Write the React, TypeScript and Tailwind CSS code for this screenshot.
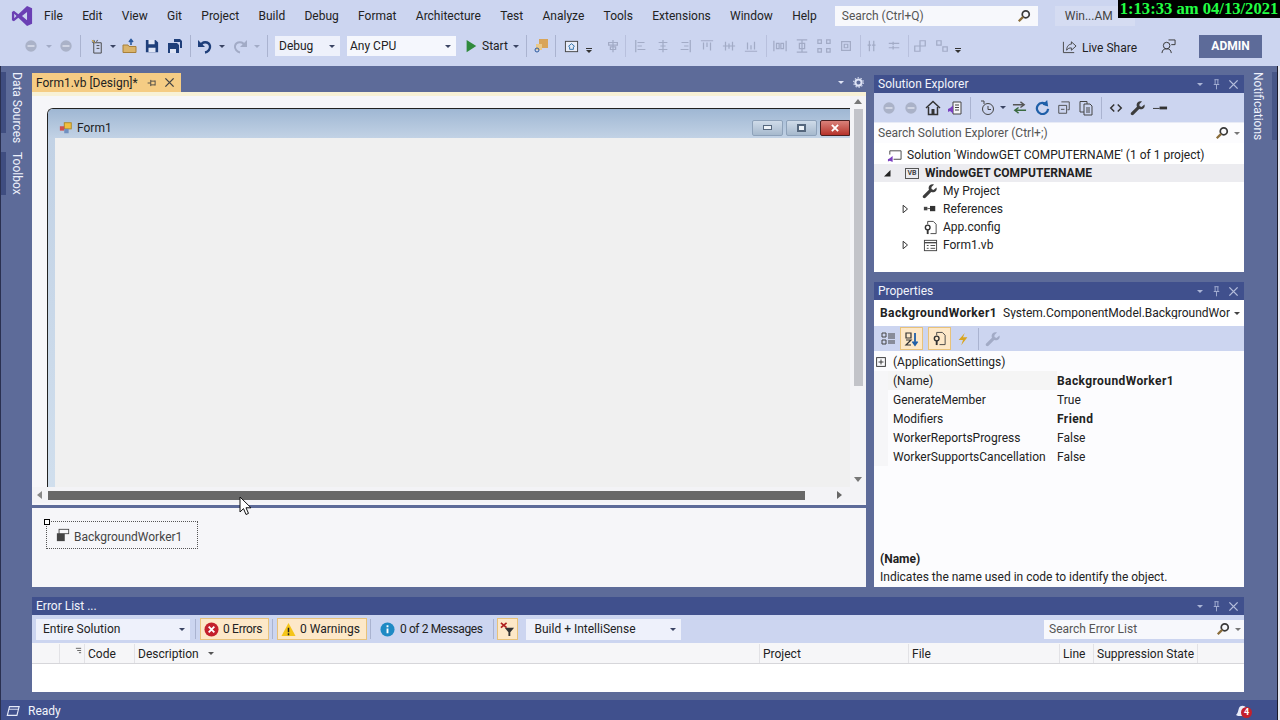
import React from "react";

type P = { children?: React.ReactNode; className?: string };
const Sv = ({ children, className = "w-4 h-4" }: P) => (
  <svg viewBox="0 0 16 16" className={className} fill="none">{children}</svg>
);
const Drop = ({ c = "border-t-[#3a4463]" }: { c?: string }) => (
  <span className={`block w-0 h-0 border-l-[3px] border-r-[3px] border-t-[3px] border-l-transparent border-r-transparent ${c}`} />
);
const Sep = ({ className = "" }: P) => <div className={`w-px h-[22px] bg-[#aab3d0] shrink-0 ${className}`} />;
const Grip = ({ className = "" }: P) => (
  <div className={`w-[4px] h-[20px] shrink-0 bg-[radial-gradient(#8c95b0_40%,transparent_45%)] bg-[length:2px_2px] ${className}`} />
);
const Slot = ({ children, className = "", w = "w-[22px]" }: P & { w?: string }) => (
  <div className={`flex items-center justify-center shrink-0 ${w} ${className}`}>{children}</div>
);

const Mag = ({ c = "#3a3a3a" }: { c?: string }) => (
  <Sv className="w-[14px] h-[14px]">
    <circle cx="10" cy="6" r="4" stroke={c} strokeWidth="2" />
    <path d="M7 9 L2 14" stroke="#8a6d3b" strokeWidth="2.6" />
  </Sv>
);
const BackCircle = () => (
  <Sv className="w-[14px] h-[14px]">
    <circle cx="8" cy="8" r="6.5" fill="#aab2c8" />
    <path d="M4 8h8" stroke="#d6dbe9" strokeWidth="2" />
  </Sv>
);
const Wrench = ({ c = "#3d3d3d", className = "w-4 h-4" }: { c?: string; className?: string }) => (
  <Sv className={className}>
    <path d="M14.5 4.5 L11.5 7 L9.5 6 L9.5 4 L12 1.5 C9.5 .6 6.6 2 6.6 5 C6.6 5.8 6.8 6.3 7 6.8 L1.2 12.4 C.5 13.2 .6 14 1.2 14.7 C2 15.4 2.8 15.3 3.5 14.7 L9.2 9 C12.2 10.2 15.6 8 14.5 4.5 Z" fill={c} />
  </Sv>
);
const Home = () => (
  <Sv className="w-[16px] h-[16px]">
    <path d="M1 8 L8 1.5 L15 8" stroke="#333" strokeWidth="1.5" />
    <path d="M3.5 7 V14.5 H12.5 V7" stroke="#333" strokeWidth="1.5" />
    <rect x="6.5" y="9" width="3" height="5.5" fill="#333" />
  </Sv>
);
const Doc = () => (
  <Sv className="w-[16px] h-[16px]">
    <path d="M2 1.5 H9 V4 M6 4 H12 L14 6 V15 H6 Z" stroke="#444" />
    <path d="M2 1.5 V12 H6" stroke="#444" />
    <path d="M8 8h4M8 10h4M8 12h4" stroke="#444" />
  </Sv>
);
const Fade = ({ d }: { d: string }) => (
  <Slot>
    <Sv className="w-[14px] h-[14px]"><path d={d} stroke="#a2abc6" strokeWidth="1.4" /></Sv>
  </Slot>
);

const Menu = ["File", "Edit", "View", "Git", "Project", "Build", "Debug", "Format", "Architecture", "Test", "Analyze", "Tools", "Extensions", "Window", "Help"];

const VSLogo = () => (
  <svg viewBox="0 0 24 24" className="w-[22px] h-[22px]">
    <path d="M17.5 1 L23 3.5 V20.5 L17.5 23 L8 13.8 L3.2 17.6 L1 16.5 V7.5 L3.2 6.4 L8 10.2 Z M17.5 7.5 L12 12 L17.5 16.5 Z M3.5 9.6 V14.4 L6 12 Z" fill="#6a3fb4" fillRule="evenodd" />
  </svg>
);

const PaneButtons = () => (
  <div className="flex items-center gap-[6px]">
    <div className="w-[11px] flex justify-center"><Drop c="border-t-[#aab4d6]" /></div>
    <Sv className="w-[11px] h-[11px]"><path d="M5 1h6M6 1v7M10 1v7M4 8h8M8 8v7" stroke="#aab4d6" strokeWidth="1.3" /></Sv>
    <Sv className="w-[11px] h-[11px]"><path d="M2 2 L14 14 M14 2 L2 14" stroke="#b4bddb" strokeWidth="2" /></Sv>
  </div>
);
const Header = ({ title }: { title: string }) => (
  <div className="h-[18px] shrink-0 bg-[#40508d] flex items-center pl-[4px] pr-[5px] text-[#f2f4fb] text-[12px]">
    <span className="flex-1">{title}</span>
    <PaneButtons />
  </div>
);

const TreeRow = ({ icon, text, caret, bold, sel, indent }: { icon: React.ReactNode; text: string; caret?: React.ReactNode; bold?: boolean; sel?: boolean; indent: string }) => (
  <div className={`h-[18px] flex items-center ${sel ? "bg-[#ececf0]" : ""}`}>
    <div className={`${indent} flex items-center justify-end shrink-0`}>{caret}</div>
    <div className="w-[16px] flex justify-center shrink-0">{icon}</div>
    <span className={`ml-[5px] ${bold ? "font-bold tracking-[0.05px]" : ""}`}>{text}</span>
  </div>
);

const PropRow = ({ k, v, bold, sel }: { k: string; v: string; bold?: boolean; sel?: boolean }) => (
  <div className="h-[19px] flex items-center">
    <div className="w-[14px] self-stretch bg-[#f6f6f8] shrink-0" />
    <div className={`w-[169px] self-stretch flex items-center pl-[5px] shrink-0 ${sel ? "bg-[#f5f5f5]" : ""}`}>{k}</div>
    <span className={bold ? "font-bold tracking-[0.4px]" : ""}>{v}</span>
  </div>
);

const ErrBtn = ({ children, on, className = "" }: P & { on?: boolean }) => (
  <div className={`h-[22px] flex items-center gap-[4px] px-[3px] shrink-0 whitespace-nowrap ${on ? "bg-[#fde8c8] border border-[#e8c27a]" : ""} ${className}`}>{children}</div>
);

const Col = ({ children, className }: P) => (
  <div className={`h-full flex items-center border-r border-[#e2e2e6] pl-[3px] shrink-0 ${className}`}>{children}</div>
);

const Caret = () => (
  <div className="mr-[12px]"><Sv className="w-[10px] h-[10px]"><path d="M5 2 L12 8 L5 14 Z" stroke="#333" strokeWidth="1.6" /></Sv></div>
);
const Config = () => (
  <Sv className="w-[15px] h-[15px]"><path d="M5 1.5h6l3 3v10H8" stroke="#444" /><path d="M5 1.5v3" stroke="#444" /><circle cx="5" cy="8" r="2.5" stroke="#333" strokeWidth="1.5" /><path d="M5 10.5V15" stroke="#333" strokeWidth="2" /></Sv>
);
const HotBox = "w-[23px] h-[23px] bg-[#fde8c8] border border-[#e8c27a]";
const WinBtn = "w-[31px] h-[16px] rounded-[2px] border border-[#8ea2ba] bg-gradient-to-b from-[#cfdbe9] to-[#a6b9cd] flex items-center justify-center";

export default function App() {
  return (
    <div className="relative w-[1280px] h-[720px] overflow-hidden flex flex-col bg-[#5d6b99] text-[12px] text-[#1e1e1e] font-['Roboto',sans-serif] leading-none">
      {/* Menu bar */}
      <div className="h-[30px] shrink-0 bg-[#ccd5f0] flex items-center pl-[11px] pt-[1px] text-[#222]">
        <VSLogo />
        <div className="flex ml-[11px] gap-[19.3px]">
          {Menu.map((m) => <span key={m}>{m}</span>)}
        </div>
        <div className="ml-[18px] w-[203px] h-[20px] bg-[#f7f8fc] flex items-center justify-between pl-[7px] pr-[7px] text-[#555] shrink-0">
          <span>Search (Ctrl+Q)</span><Mag />
        </div>
        <div className="ml-[17px] h-[20px] w-[80px] bg-[#d5dcf2] flex items-center pl-[10px] text-[#444] shrink-0">Win...AM</div>
      </div>

      {/* Toolbar */}
      <div className="h-[36px] shrink-0 bg-[#ccd5f0] flex items-center pl-[11px] pb-[4px] text-[#222]">
        <Grip />
        <Slot w="w-[18px]" className="ml-[7px]"><BackCircle /></Slot>
        <Slot w="w-[18px]"><Drop c="border-t-[#a2abc6]" /></Slot>
        <Slot w="w-[16px]"><BackCircle /></Slot>
        <Sep className="ml-[6px]" />
        <Slot className="ml-[5px]">
          <Sv className="w-[15px] h-[15px]"><path d="M4 4 H12 V15 H4 Z" stroke="#444" /><path d="M7 7h3M7 10h3M4 1l1 2M2 3l2 1M8 1l-1 2" stroke="#444" /><path d="M2 1 L5 4" stroke="#d9a520" /></Sv>
        </Slot>
        <Slot w="w-[10px]"><Drop /></Slot>
        <Slot className="ml-[1px]">
          <Sv className="w-[16px] h-[16px]"><path d="M1 7 H6 L7 8.5 H14 V14.5 H1 Z" fill="#d9b36a" stroke="#a8803a" /><path d="M9 7 V2 M7 4 L9 1.5 L11 4" stroke="#2b5a9e" strokeWidth="1.6" /></Sv>
        </Slot>
        <Slot>
          <Sv className="w-[14px] h-[14px]"><path d="M1 1 H12 L15 4 V15 H1 Z" fill="#1f3f7a" /><rect x="4" y="1" width="7" height="5" fill="#dfe5f5" /><rect x="4" y="10" width="8" height="5" fill="#dfe5f5" /></Sv>
        </Slot>
        <Slot className="ml-[1px]">
          <Sv className="w-[16px] h-[16px]"><path d="M1 5 H10 L12 7 V15 H1 Z" fill="#1f3f7a" /><rect x="3" y="11" width="6" height="4" fill="#dfe5f5" /><path d="M7 1 H13 L15 3 V10 H13 V4 H7 Z" fill="#1f3f7a" /></Sv>
        </Slot>
        <Sep className="ml-[4px]" />
        <Slot className="ml-[3px]">
          <Sv className="w-[16px] h-[16px]"><path d="M4 8 C4 3 12 3 13 8 C13.5 11 11 14 8 14.5" stroke="#1f3f7a" strokeWidth="2.4" /><path d="M1 2 V9 H8 Z" fill="#1f3f7a" /></Sv>
        </Slot>
        <Slot w="w-[10px]" className="ml-[1px]"><Drop /></Slot>
        <Slot className="ml-[2px]">
          <Sv className="w-[16px] h-[16px]"><path d="M12 8 C12 3 4 3 3 8 C2.5 11 5 14 8 14.5" stroke="#a2abc6" strokeWidth="2" /><path d="M15 2 V9 H8 Z" fill="#a2abc6" /></Sv>
        </Slot>
        <Slot w="w-[10px]" className="ml-[1px]"><Drop c="border-t-[#a2abc6]" /></Slot>
        <Sep className="ml-[5px]" />
        <div className="ml-[7px] w-[65px] h-[20px] bg-[#eef1fb] flex items-center justify-between pl-[4px] pr-[5px] shrink-0"><span>Debug</span><Drop /></div>
        <div className="ml-[7px] w-[109px] h-[20px] bg-[#f5f7fd] flex items-center justify-between pl-[3px] pr-[5px] shrink-0"><span>Any CPU</span><Drop /></div>
        <Slot className="ml-[4px]"><Sv className="w-[14px] h-[14px]"><path d="M3 1 L14 8 L3 15 Z" fill="#2f8a3c" /></Sv></Slot>
        <span className="w-[26px] shrink-0">Start</span>
        <Slot w="w-[10px]" className="ml-[3px]"><Drop /></Slot>
        <Sep className="ml-[5px]" />
        <Slot className="ml-[3px]">
          <Sv className="w-[16px] h-[16px]"><rect x="6" y="1" width="9" height="9" fill="#d9a558" /><rect x="3" y="6" width="6" height="6" fill="#e9c98a" /><circle cx="4" cy="12" r="2" stroke="#2b5a9e" /></Sv>
        </Slot>
        <Sep className="ml-[3px]" />
        <Slot className="ml-[4px]">
          <Sv className="w-[15px] h-[15px]"><rect x="1.5" y="2.5" width="13" height="11" fill="#e8ecf8" stroke="#444" /><path d="M4.5 8 L8 5 L11.5 8 M6 8 V11 H10 V8" stroke="#2b6fa8" /></Sv>
        </Slot>
        <Slot w="w-[10px]" className="ml-[2px]"><div className="flex flex-col items-center gap-[1px] mt-[8px]"><div className="w-[6px] h-px bg-[#333]" /><Drop c="border-t-[#333]" /></div></Slot>
        <Grip className="ml-[4px]" />
        <Fade d="M8 1v14M3 4h10v3H3zM5 9h6v3H5z" />
        <Sep className="opacity-60 ml-[1px] mr-[4px]" />
        <Fade d="M2 1v14M4 4h8M4 8h5M4 12h9" />
        <Fade d="M8 1v14M3 4h10M5 8h6M3 12h10" />
        <Fade d="M14 1v14M4 4h8M7 8h5M3 12h9" />
        <Fade d="M1 2h14M4 4v8M8 4v5M12 4v9" />
        <Fade d="M1 8h14M4 3v10M8 5v6M12 3v10" />
        <Fade d="M1 14h14M4 4v8M8 7v5M12 3v9" />
        <Sep className="opacity-60 ml-[4px] mr-[2px]" />
        <Fade d="M1 2v12M15 2v12M4 5h3v6H4zM9 5h3v6H9z" />
        <Fade d="M2 1h12M2 15h12M8 1v14M5 5h6v6H5z" />
        <Fade d="M1 1h4v4H1zM11 1h4v4h-4zM1 11h4v4H1zM11 11h4v4h-4z" />
        <Fade d="M3 3h10v10H3zM6 6h4v4H6z" />
        <Sep className="opacity-60 ml-[3px]" />
        <Fade d="M5 2v12M10 2v12M3 7h4M8 7h4" />
        <Fade d="M2 5h12M2 10h12M7 3v4M7 8v4" />
        <Sep className="opacity-60 ml-[3px]" />
        <Fade d="M2 8h6v6H2zM8 2h6v6H8z" />
        <Fade d="M2 2h5v5H2zM9 9h5v5H9z" />
        <Slot w="w-[10px]"><div className="flex flex-col items-center gap-[1px] mt-[8px]"><div className="w-[6px] h-px bg-[#333]" /><Drop c="border-t-[#333]" /></div></Slot>

        <div className="ml-auto flex items-center shrink-0">
          <Sv className="w-[15px] h-[15px]"><path d="M1.5 3 V14.5 H13" stroke="#444" /><path d="M5 12 C5 7 8 5.5 10 5.5 V3 L15 7.5 L10 12 V9.5 C8 9.5 6 10 5 12 Z" stroke="#444" /></Sv>
          <span className="ml-[5px] mt-[3px]">Live Share</span>
          <div className="ml-[24px]">
            <Sv className="w-[15px] h-[15px]"><circle cx="6" cy="7" r="3.5" stroke="#333" /><path d="M1 15 C1.5 11.5 3 10.5 6 10.5 C9 10.5 10.5 11.5 11 15" stroke="#333" /><path d="M8 1 H15 V6 H11" stroke="#333" /></Sv>
          </div>
          <div className="ml-[23px] mr-[18px] w-[63px] h-[23px] bg-[#5d6b99] text-white font-bold flex items-center justify-center">ADMIN</div>
        </div>
      </div>

      {/* Body */}
      <div className="flex-1 flex min-h-0">
        <div className="w-[32px] shrink-0 flex flex-col pt-[6px] pl-[1px] text-[#eef1fb]">
          <div className="flex h-[61px]">
            <div className="w-[5px] bg-[#3f4d80]" />
            <span className="ml-[5px] [writing-mode:vertical-rl] whitespace-nowrap">Data Sources</span>
          </div>
          <div className="flex mt-[19px] h-[43px]">
            <div className="w-[5px] bg-[#3f4d80]" />
            <span className="ml-[5px] [writing-mode:vertical-rl] whitespace-nowrap">Toolbox</span>
          </div>
        </div>

        <div className="w-[1212px] shrink-0 pt-[7px] flex flex-col">
          <div className="h-[514px] flex gap-[8px] shrink-0">
            {/* Document */}
            <div className="w-[834px] shrink-0 flex flex-col relative">
              <div className="h-[19px] shrink-0 flex items-end justify-between">
                <div className="w-[149px] h-[19px] bg-[#f5cc84] flex items-center pl-[4px] pr-[6px] text-[#222]">
                  <span className="flex-1">Form1.vb [Design]*</span>
                  <Sv className="w-[10px] h-[10px] mr-[7px]"><path d="M1 8h5M6 3v10M6 5h7M6 11h7M13 4v8" stroke="#444" strokeWidth="1.4" /></Sv>
                  <Sv className="w-[11px] h-[11px]"><path d="M2 2 L14 14 M14 2 L2 14" stroke="#444" strokeWidth="2" /></Sv>
                </div>
                <div className="flex items-center gap-[9px] h-[19px] pr-[2px]">
                  <Drop c="border-t-[#dfe4f5]" />
                  <Sv className="w-[11px] h-[11px]"><circle cx="8" cy="8" r="4.5" stroke="#dfe4f5" strokeWidth="3" /><circle cx="8" cy="8" r="7" stroke="#dfe4f5" strokeWidth="1.6" strokeDasharray="2 2.4" /></Sv>
                </div>
              </div>
              <div className="h-[4px] shrink-0 bg-[#f8f1d6]" />
              {/* Design surface */}
              <div className="h-[409px] shrink-0 bg-[#f6f6f9] flex flex-col">
                <div className="flex-1 flex min-h-0">
                  <div className="w-[818px] shrink-0 overflow-hidden pl-[15px] pt-[12px]">
                    <div className="h-[420px] border-l border-t border-[#222] rounded-tl-[6px] flex flex-col overflow-hidden">
                      <div className="h-[29px] shrink-0 bg-gradient-to-b from-[#9fb7d3] to-[#c2d2e5] flex items-center pl-[11px] pt-[8px] text-[#222]">
                        <Sv className="w-[14px] h-[14px]"><rect x="6" y="2" width="8" height="7" fill="#f0c040" stroke="#a88420" /><rect x="1" y="6" width="5" height="5" fill="#d05050" /><rect x="6" y="9" width="5" height="5" fill="#7090c0" /></Sv>
                        <span className="ml-[4px] flex-1">Form1</span>
                        <div className="flex gap-[3px]">
                          <div className={WinBtn}><div className="w-[9px] h-[5px] bg-[#eef3f8] border border-[#55677d]" /></div>
                          <div className={WinBtn}><div className="w-[9px] h-[8px] border-2 border-[#55677d] bg-[#eef3f8]" /></div>
                          <div className="w-[30px] h-[16px] rounded-l-[2px] border border-[#4a2020] bg-gradient-to-b from-[#d9817a] to-[#b5302a] flex items-center justify-center">
                            <Sv className="w-[10px] h-[10px]"><path d="M3 3 L13 13 M13 3 L3 13" stroke="#fff" strokeWidth="3" /></Sv>
                          </div>
                        </div>
                      </div>
                      <div className="flex-1 flex">
                        <div className="w-[7px] bg-gradient-to-b from-[#c2d2e5] to-[#d2e0ee]" />
                        <div className="flex-1 bg-[#f0f0f0]" />
                      </div>
                    </div>
                  </div>
                  <div className="w-[16px] shrink-0 bg-[#f3f3f6] flex flex-col items-center pt-[3px]">
                    <span className="w-0 h-0 border-l-[4px] border-r-[4px] border-b-[5px] border-l-transparent border-r-transparent border-b-[#777]" />
                    <div className="mt-[5px] w-[9px] h-[277px] bg-[#c2c3c9]" />
                    <span className="mt-auto mb-[5px] w-0 h-0 border-l-[4px] border-r-[4px] border-t-[5px] border-l-transparent border-r-transparent border-t-[#777]" />
                  </div>
                </div>
                <div className="h-[16px] shrink-0 bg-[#f3f3f6] flex items-center pl-[5px]">
                  <span className="w-0 h-0 border-t-[4px] border-b-[4px] border-r-[5px] border-t-transparent border-b-transparent border-r-[#888]" />
                  <div className="ml-[6px] w-[757px] h-[9px] bg-[#686868]" />
                  <span className="ml-[32px] w-0 h-0 border-t-[4px] border-b-[4px] border-l-[5px] border-t-transparent border-b-transparent border-l-[#666]" />
                </div>
                <div className="h-[2px] shrink-0" />
              </div>
              <div className="h-[3px] shrink-0 bg-[#5d6b99]" />
              {/* Component tray */}
              <div className="flex-1 bg-[#f6f6f9] pl-[14px] pt-[13px]">
                <div className="relative w-[152px] h-[28px] border border-dotted border-[#555] flex items-center pl-[9px] text-[#444]">
                  <span className="absolute -left-[3px] -top-[3px] w-[6px] h-[6px] bg-white border border-black" />
                  <Sv className="w-[14px] h-[14px]"><rect x="1" y="6" width="9" height="9" fill="#444" /><rect x="3.5" y="1.5" width="11" height="5" fill="#f6f6f9" stroke="#444" /></Sv>
                  <span className="ml-[4px] mt-[3px]">BackgroundWorker1</span>
                </div>
              </div>
            </div>

            {/* Right panes */}
            <div className="w-[370px] shrink-0 flex flex-col gap-[10px]">
              <div className="h-[199px] shrink-0 flex flex-col">
                <div className="mt-[2px]"><Header title="Solution Explorer" /></div>
                <div className="h-[29px] shrink-0 bg-[#ccd5f0] flex items-center pl-[4px]">
                  <Slot><BackCircle /></Slot>
                  <Slot><BackCircle /></Slot>
                  <Slot><Home /></Slot>
                  <Slot><Sv className="w-[16px] h-[16px]"><path d="M6 2h8v12H6z" fill="#f5f5f8" stroke="#444" /><path d="M8 5h4M8 7.5h4M8 10h4" stroke="#444" /><path d="M1 9 L3 8 L6 5.5 V13.5 L3 11 L1 12 Z" fill="#7a3fc0" /></Sv></Slot>
                  <Sep className="ml-[4px]" />
                  <Slot className="ml-[5px]"><Sv className="w-[16px] h-[16px]"><circle cx="9" cy="9" r="5.5" stroke="#444" /><path d="M9 6v3.5h3M2 1h3v3" stroke="#444" /></Sv></Slot>
                  <Slot w="w-[10px]"><Drop /></Slot>
                  <Slot w="w-[23px]"><Sv className="w-[15px] h-[15px]"><path d="M1 5h11M9 2l4 3-4 3" stroke="#555" strokeWidth="1.5" /><path d="M15 11H4M7 8l-4 3 4 3" stroke="#3a6a40" strokeWidth="1.5" /></Sv></Slot>
                  <Slot><Sv className="w-[15px] h-[15px]"><path d="M12.5 5 A6 6 0 1 0 14 9.5" stroke="#1f5fa8" strokeWidth="2.4" /><path d="M13 0 L14 7 L8 5 Z" fill="#1f5fa8" /></Sv></Slot>
                  <Slot><Sv className="w-[14px] h-[14px]"><path d="M5 1h9v9h-2M2 5h9v9H2z" stroke="#444" /><path d="M4.5 9.5h4" stroke="#444" /></Sv></Slot>
                  <Slot><Doc /></Slot>
                  <Sep className="ml-[4px]" />
                  <Slot className="ml-[3px]"><Sv className="w-[14px] h-[14px]"><path d="M6 4 L2 8 L6 12 M10 4 L14 8 L10 12" stroke="#333" strokeWidth="1.7" /></Sv></Slot>
                  <Slot><Wrench /></Slot>
                  <Slot><Sv className="w-[15px] h-[15px]"><path d="M0 9h7" stroke="#333" /><rect x="7" y="7" width="8" height="3" fill="#333" /></Sv></Slot>
                </div>
                <div className="h-[21px] shrink-0 bg-[#fcfcfe] flex items-center pl-[4px] pr-[4px] text-[#555] border-t border-[#e8ebf6]">
                  <span className="flex-1">Search Solution Explorer (Ctrl+;)</span>
                  <Mag />
                  <div className="ml-[5px]"><Drop c="border-t-[#777]" /></div>
                </div>
                <div className="flex-1 bg-white pt-[3px] text-[#222]">
                  <TreeRow indent="w-[12px]" text="Solution 'WindowGET COMPUTERNAME' (1 of 1 project)" icon={<Sv className="w-[15px] h-[15px]"><path d="M3 3h12v9H7" stroke="#444" /><path d="M3 3v4" stroke="#444" /><path d="M1 12 L3 11 L6 8.5 V15 L3 13.5 L1 14.5 Z" fill="#7a3fc0" /></Sv>} />
                  <TreeRow indent="w-[30px]" sel bold text="WindowGET COMPUTERNAME"
                    caret={<div className="mr-[13px]"><Sv className="w-[8px] h-[8px]"><path d="M15 2 V15 H2 Z" fill="#222" /></Sv></div>}
                    icon={<div className="w-[14px] h-[11px] border border-[#555] text-[7px] font-bold flex items-center justify-center text-[#444]">VB</div>} />
                  <TreeRow indent="w-[48px]" text="My Project" icon={<Wrench />} />
                  <TreeRow indent="w-[48px]" text="References" caret={<Caret />}
                    icon={<Sv className="w-[14px] h-[14px]"><rect x="1" y="5.5" width="4" height="4" fill="#444" /><path d="M5 7.5h3" stroke="#444" /><rect x="8" y="4.5" width="6" height="6" fill="#333" /></Sv>} />
                  <TreeRow indent="w-[48px]" text="App.config" icon={<Config />} />
                  <TreeRow indent="w-[48px]" text="Form1.vb" caret={<Caret />}
                    icon={<Sv className="w-[15px] h-[15px]"><rect x="1.5" y="2.5" width="13" height="11" stroke="#444" /><path d="M1.5 5h13" stroke="#444" strokeWidth="1.4" /><path d="M4 8h2M8 8h5M4 11h2M8 11h5" stroke="#444" /></Sv>} />
                </div>
              </div>

              <div className="flex-1 min-h-0 flex flex-col">
                <Header title="Properties" />
                <div className="h-[26px] shrink-0 bg-white flex items-center pl-[6px] pr-[4px] text-[#222] overflow-hidden">
                  <span className="font-bold shrink-0 tracking-[0.4px]">BackgroundWorker1</span>
                  <span className="ml-[6px] flex-1 overflow-hidden whitespace-nowrap">System.ComponentModel.BackgroundWor</span>
                  <div className="ml-[4px]"><Drop c="border-t-[#444]" /></div>
                </div>
                <div className="h-[25px] shrink-0 bg-[#ccd5f0] flex items-center pl-[3px]">
                  <Slot><Sv className="w-[16px] h-[16px]"><path d="M2 2h4v4H2zM2 9h4v4H2z" stroke="#444" /><path d="M8 3h7M8 5h7M8 7h7M8 10h7M8 12h7" stroke="#444" /></Sv></Slot>
                  <Slot w={HotBox} className="ml-[1px]">
                    <Sv className="w-[16px] h-[16px]"><path d="M2 2h5v5H2zM2 9h5l-5 5h5" stroke="#333" strokeWidth="1.2" /><path d="M11 2v11M8.5 10.5L11 14l2.5-3.5" stroke="#1f5fa8" strokeWidth="1.8" /></Sv>
                  </Slot>
                  <Slot w={HotBox} className="ml-[5px]"><Config /></Slot>
                  <Slot className="ml-[1px]"><Sv className="w-[14px] h-[14px]"><path d="M10 1 L3 9 H8 L6 15 L13 6 H8 Z" fill="#d9a520" /></Sv></Slot>
                  <Sep className="ml-[4px]" />
                  <Slot className="ml-[3px]"><Wrench c="#a2abc6" /></Slot>
                </div>
                <div className="flex-1 bg-[#fcfcfe] flex flex-col text-[#222]">
                  <div className="h-[20px] pt-[1px] flex items-center">
                    <div className="w-[14px] flex justify-center"><Sv className="w-[10px] h-[10px]"><rect x="1" y="1" width="14" height="14" stroke="#333" strokeWidth="1.5" /><path d="M4 8h8M8 4v8" stroke="#333" strokeWidth="1.5" /></Sv></div>
                    <span className="ml-[5px]">(ApplicationSettings)</span>
                  </div>
                  <PropRow sel k="(Name)" v="BackgroundWorker1" bold />
                  <PropRow k="GenerateMember" v="True" />
                  <PropRow k="Modifiers" v="Friend" bold />
                  <PropRow k="WorkerReportsProgress" v="False" />
                  <PropRow k="WorkerSupportsCancellation" v="False" />
                  <div className="mt-auto h-[39px] pl-[6px] flex flex-col justify-center gap-[6px]">
                    <span className="font-bold">(Name)</span>
                    <span>Indicates the name used in code to identify the object.</span>
                  </div>
                </div>
              </div>
            </div>
          </div>

          {/* Error list */}
          <div className="mt-[10px] h-[95px] shrink-0 flex flex-col">
            <Header title="Error List ..." />
            <div className="h-[28px] shrink-0 bg-[#ccd5f0] flex items-center pl-[4px] text-[#222]">
              <div className="w-[154px] h-[21px] bg-[#eef1fb] flex items-center justify-between pl-[7px] pr-[5px] shrink-0"><span>Entire Solution</span><Drop /></div>
              <div className="w-px h-[20px] bg-[#aab3d0] ml-[5px]" />
              <ErrBtn on className="ml-[4px] w-[69px]">
                <Sv className="w-[15px] h-[15px] shrink-0"><circle cx="8" cy="8" r="7.5" fill="#c4202c" /><path d="M5 5 L11 11 M11 5 L5 11" stroke="#fff" strokeWidth="2" /></Sv>
                <span className="tracking-[-0.3px]">0 Errors</span>
              </ErrBtn>
              <div className="w-px h-[20px] bg-[#aab3d0] ml-[3px]" />
              <ErrBtn on className="ml-[4px] w-[90px]">
                <Sv className="w-[15px] h-[15px] shrink-0"><path d="M8 1 L15.5 15 H.5 Z" fill="#f5c518" /><path d="M8 6v5M8 12v2" stroke="#222" strokeWidth="1.6" /></Sv>
                <span>0 Warnings</span>
              </ErrBtn>
              <div className="w-px h-[20px] bg-[#aab3d0] ml-[3px]" />
              <ErrBtn className="ml-[6px] gap-[5px]">
                <Sv className="w-[15px] h-[15px] shrink-0"><circle cx="8" cy="8" r="7.5" fill="#1f8ac4" /><path d="M8 7v5M8 3.5v2" stroke="#fff" strokeWidth="2" /></Sv>
                <span className="tracking-[-0.4px]">0 of 2 Messages</span>
              </ErrBtn>
              <div className="w-px h-[20px] bg-[#aab3d0] ml-[8px]" />
              <ErrBtn on className="ml-[3px] w-[21px] justify-center !px-0">
                <Sv className="w-[15px] h-[15px]"><path d="M5 6 H15 L11 11 V15 H9 V11 Z" fill="#333" /><path d="M1 1 L7 6 M7 1 L1 6" stroke="#b02020" strokeWidth="1.8" /></Sv>
              </ErrBtn>
              <div className="ml-[8px] w-[155px] h-[21px] bg-[#eef1fb] flex items-center justify-between pl-[8px] pr-[5px] shrink-0"><span>Build + IntelliSense</span><Drop /></div>
              <div className="ml-auto w-[200px] h-[19px] bg-[#f7f8fc] flex items-center pl-[5px] pr-[3px] text-[#555]">
                <span className="flex-1">Search Error List</span><Mag /><div className="ml-[5px]"><Drop c="border-t-[#777]" /></div>
              </div>
            </div>
            <div className="h-[21px] shrink-0 bg-[#f6f6f8] flex items-center pt-[1px] border-b border-[#d6d6da] text-[#222]">
              <Col className="w-[28px]" />
              <Col className="w-[25px] !items-start !pt-[3px] justify-end pr-[2px]"><Sv className="w-[7px] h-[7px]"><path d="M2 3h12M5 8h9M9 13h5" stroke="#555" strokeWidth="2" /></Sv></Col>
              <Col className="w-[50px]">Code</Col>
              <Col className="w-[625px] gap-[9px]"><span>Description</span><Drop c="border-t-[#555]" /></Col>
              <Col className="w-[149px]">Project</Col>
              <Col className="w-[151px]">File</Col>
              <Col className="w-[34px]">Line</Col>
              <Col className="w-[104px]">Suppression State</Col>
              <div className="flex-1" />
            </div>
            <div className="flex-1 bg-white" />
          </div>
        </div>

        <div className="flex-1 pt-[6px] pl-[8px] text-[#eef1fb] flex">
          <span className="[writing-mode:vertical-rl] whitespace-nowrap">Notifications</span>
          <div className="ml-[8px] w-[6px] h-[68px] bg-[#475687]" />
        </div>
      </div>

      {/* Status */}
      <div className="h-[20px] shrink-0 bg-[#40508d] flex items-center pl-[6px] pr-[30px] pt-[1px] text-[#f2f4fb]">
        <Sv className="w-[14px] h-[14px]"><path d="M4 3 H15 L12.5 13 H1.5 Z" stroke="#e6eaf8" strokeWidth="1.3" /><path d="M3.5 6 H14" stroke="#e6eaf8" /></Sv>
        <span className="ml-[8px] flex-1">Ready</span>
        <div className="relative w-[16px] h-[16px]">
          <Sv className="w-[16px] h-[16px]"><path d="M2 12 C4 10 4 8 5 5 C6 2 11 2 12 5 V13 H4 Z" fill="#e8ebf8" /></Sv>
          <span className="absolute left-[7px] top-[4px] w-[11px] h-[11px] rounded-full bg-[#c4202c] text-white text-[9px] font-bold flex items-center justify-center">4</span>
        </div>
      </div>

      {/* Window edges behind the video frame */}
      <div className="absolute left-0 top-[66px] bottom-0 w-px bg-[#2a3050]" />
      <div className="absolute right-0 top-[66px] bottom-0 w-[3px] border-l border-[#1a1a2a] bg-[#e8e8ee]" />

      {/* Clock overlay */}
      <div className="absolute right-0 top-0 w-[162px] h-[18px] bg-black text-[#22ff44] font-['Liberation_Serif',serif] font-bold text-[16.6px] flex items-center justify-center whitespace-nowrap">1:13:33 am 04/13/2021</div>

      {/* Cursor */}
      <svg viewBox="0 0 14 20" className="absolute left-[239px] top-[496px] w-[14px] h-[20px]">
        <path d="M1 1 V16 L4.5 12.6 L7 18.5 L9.5 17.4 L7 11.8 H12 Z" fill="#fff" stroke="#111" strokeWidth="1" />
      </svg>
    </div>
  );
}
